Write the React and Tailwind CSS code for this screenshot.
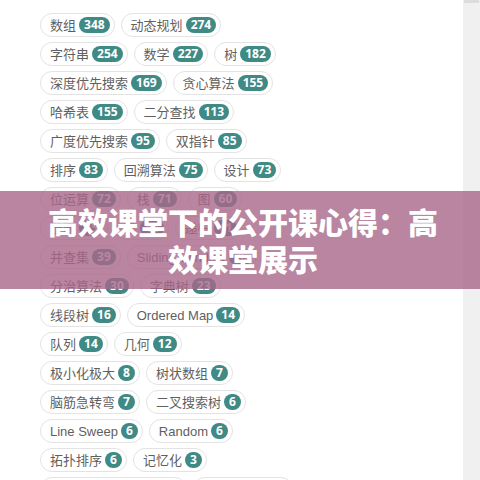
const rows = [
  [["数组", 348], ["动态规划", 274]],
  [["字符串", 254], ["数学", 227], ["树", 182]],
  [["深度优先搜索", 169], ["贪心算法", 155]],
  [["哈希表", 155], ["二分查找", 113]],
  [["广度优先搜索", 95], ["双指针", 85]],
  [["排序", 83], ["回溯算法", 75], ["设计", 73]],
  [["位运算", 72], ["栈", 71], ["图", 60]],
  [["链表", 45], ["堆", 42], ["递归", 41]],
  [["并查集", 39], ["Sliding Window", 26]],
  [["分治算法", 30], ["字典树", 23]],
  [["线段树", 16], ["Ordered Map", 14]],
  [["队列", 14], ["几何", 12]],
  [["极小化极大", 8], ["树状数组", 7]],
  [["脑筋急转弯", 7], ["二叉搜索树", 6]],
  [["Line Sweep", 6], ["Random", 6]],
  [["拓扑排序", 6], ["记忆化", 3]],
  [["Rejection Sampling", 2], ["蓄水池抽样", 2]],
];

function Tag({ name, count }) {
  return (
    <div className="flex h-[24px] items-center gap-[3px] rounded-full border border-[#e3e3e3] bg-white pl-[9px] pr-[4px]">
      <span
        className="text-[13px] leading-none text-[#5f5f5f]"
        style={{ fontFamily: '"Liberation Sans", "Noto Sans CJK SC", sans-serif' }}
      >
        {name}
      </span>
      <span className="flex h-[16px] min-w-[16px] items-center justify-center rounded-full bg-[#3f8a85] px-[5px] text-[12px] font-bold leading-none text-white">
        {count}
      </span>
    </div>
  );
}

export default function App() {
  return (
    <div
      className="relative flex h-[480px] w-[480px] overflow-hidden bg-white"
      style={{ fontFamily: '"Open Sans", "Noto Sans CJK SC", sans-serif' }}
    >
      {/* Tags */}
      <div className="flex flex-1 flex-col gap-[5px] pl-[40px] pt-[13px]">
        {rows.map((row, i) => (
          <div className="flex gap-[6px]" key={i}>
            {row.map(([name, count]) => (
              <Tag key={name} name={name} count={count} />
            ))}
          </div>
        ))}
      </div>

      {/* Scrollbar */}
      <div className="flex w-[17px] flex-col bg-[#f0f0f0]">
        <div className="mx-[1px] h-[3px] bg-[#dcdcdc]" />
      </div>

      {/* Title banner */}
      <div className="absolute left-0 right-0 top-[191px] flex h-[98px] items-center justify-center bg-[#a8668a]/80">
        <p
          className="w-[400px] pl-[6px] text-center text-[30px] font-black leading-[37px] text-white"
          style={{ fontFamily: '"Noto Sans CJK SC", sans-serif' }}
        >
          高效课堂下的公开课心得：高效课堂展示
        </p>
      </div>
    </div>
  );
}
